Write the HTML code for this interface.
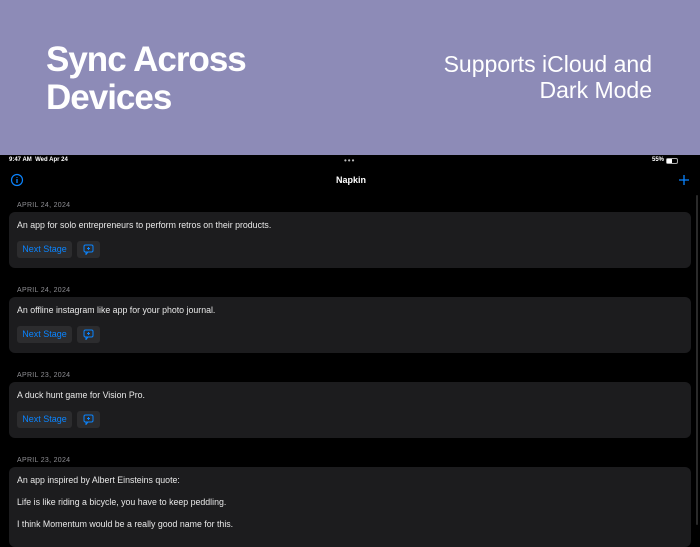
<!DOCTYPE html>
<html><head><style>
*{margin:0;padding:0;box-sizing:border-box}
body{width:700px;height:525px;overflow:hidden;background:#000;font-family:"Liberation Sans",sans-serif;position:relative}
.banner{position:absolute;left:0;top:0;width:700px;height:155px;background:#8d8bb7}
.t1{position:absolute;left:46px;top:41px;color:#fff;font-weight:bold;font-size:35px;line-height:38px;letter-spacing:-1px}
.t2{position:absolute;right:48px;top:51px;color:#fff;font-size:23px;line-height:26px;text-align:right;font-weight:300}
.abs{position:absolute}
.date{position:absolute;left:17px;font-size:7px;color:#8e8e93;letter-spacing:0.3px}
.card{position:absolute;left:9px;width:682px;background:#1c1c1e;border-radius:6px}
.txt{position:absolute;left:8px;font-size:8.8px;color:#e8e8e8}
.btn{position:absolute;top:29px;height:17px;background:#2c2c2e;border-radius:3px;color:#0a84ff;font-size:9px;line-height:17px;text-align:center}
</style></head><body>
<div class="banner"></div>
<div class="t1">Sync Across<br>Devices</div>
<div class="t2">Supports iCloud and<br>Dark Mode</div>

<div class="abs" style="left:9px;top:157px;font-size:6px;color:#fff;font-weight:bold">9:47 AM&nbsp;&nbsp;Wed Apr 24</div>
<div class="abs" style="left:344px;top:156px;font-size:8px;color:#bbb;letter-spacing:1px">•••</div>
<div class="abs" style="left:652px;top:157px;font-size:6px;color:#fff;font-weight:bold">55%</div>
<div class="abs" style="left:666px;top:158px;width:12px;height:6px;border:1px solid #aaa;border-radius:2px"><div style="width:5px;height:4px;background:#fff"></div></div>
<svg class="abs" style="left:10px;top:173px" width="14" height="14"><circle cx="7" cy="7" r="5.5" fill="none" stroke="#0a84ff" stroke-width="1.2"/><path d="M7 6v4M7 4v.8" stroke="#0a84ff" stroke-width="1.3"/></svg>
<div class="abs" style="left:336px;top:175px;font-size:9px;color:#fff;font-weight:bold">Napkin</div>
<svg class="abs" style="left:678px;top:174px" width="12" height="12"><path d="M6 1v10M1 6h10" stroke="#0a84ff" stroke-width="1.3"/></svg>
<div class="abs" style="left:696px;top:195px;width:2px;height:330px;background:#2a2a2a;border-radius:1px"></div>

<div class="date" style="top:202px">APRIL 24, 2024</div>
<div class="card" style="top:212px;height:56px"><div class="txt" style="top:8px">An app for solo entrepreneurs to perform retros on their products.</div>
<div class="btn" style="left:8px;width:55px">Next Stage</div><div class="btn" style="left:68px;width:23px"><svg width="11" height="11" style="margin-top:3px"><rect x="1" y="1" width="9" height="7" rx="1.5" fill="none" stroke="#0a84ff"/><path d="M5.5 3v3M4 4.5h3M3 8l0 2.5 2-2.5" stroke="#0a84ff" fill="none"/></svg></div></div>

<div class="date" style="top:287px">APRIL 24, 2024</div>
<div class="card" style="top:297px;height:56px"><div class="txt" style="top:8px">An offline instagram like app for your photo journal.</div>
<div class="btn" style="left:8px;width:55px">Next Stage</div><div class="btn" style="left:68px;width:23px"><svg width="11" height="11" style="margin-top:3px"><rect x="1" y="1" width="9" height="7" rx="1.5" fill="none" stroke="#0a84ff"/><path d="M5.5 3v3M4 4.5h3M3 8l0 2.5 2-2.5" stroke="#0a84ff" fill="none"/></svg></div></div>

<div class="date" style="top:372px">APRIL 23, 2024</div>
<div class="card" style="top:382px;height:56px"><div class="txt" style="top:8px">A duck hunt game for Vision Pro.</div>
<div class="btn" style="left:8px;width:55px">Next Stage</div><div class="btn" style="left:68px;width:23px"><svg width="11" height="11" style="margin-top:3px"><rect x="1" y="1" width="9" height="7" rx="1.5" fill="none" stroke="#0a84ff"/><path d="M5.5 3v3M4 4.5h3M3 8l0 2.5 2-2.5" stroke="#0a84ff" fill="none"/></svg></div></div>

<div class="date" style="top:457px">APRIL 23, 2024</div>
<div class="card" style="top:467px;height:80px"><div class="txt" style="top:8px">An app inspired by Albert Einsteins quote:</div>
<div class="txt" style="top:30px">Life is like riding a bicycle, you have to keep peddling.</div>
<div class="txt" style="top:52px">I think Momentum would be a really good name for this.</div></div>
</body></html>
